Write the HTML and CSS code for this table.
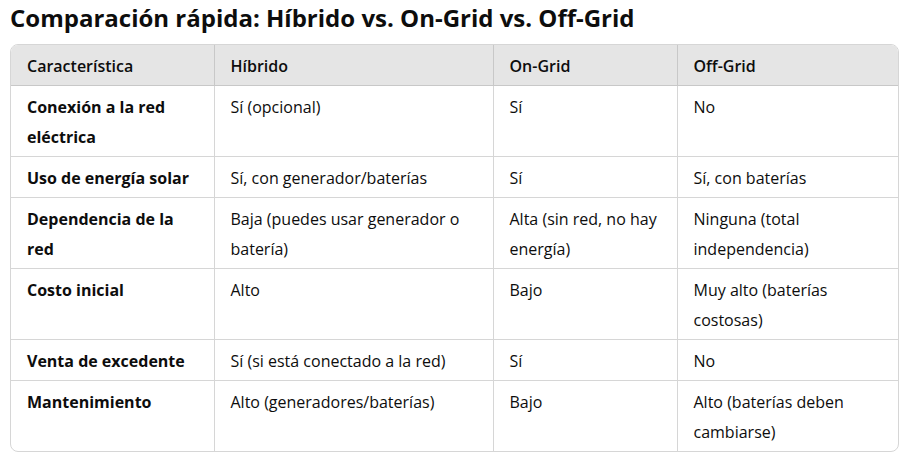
FILE: index.html
```html
<!DOCTYPE html>
<html lang="es">
<head>
<meta charset="utf-8">
<link rel="stylesheet" href="styles.css">
</head>
<body>
<main class="page">
  <h3 class="title">Comparación rápida: Híbrido vs. On-Grid vs. Off-Grid</h3>
  <div class="table-wrap">
    <table class="cmp">
      <colgroup>
        <col class="c1"><col class="c2"><col class="c3"><col class="c4">
      </colgroup>
      <thead>
        <tr><th>Característica</th><th>Híbrido</th><th>On-Grid</th><th>Off-Grid</th></tr>
      </thead>
      <tbody>
        <tr><td class="feat">Conexión a la red eléctrica</td><td>Sí (opcional)</td><td>Sí</td><td>No</td></tr>
        <tr><td class="feat">Uso de energía solar</td><td>Sí, con generador/baterías</td><td>Sí</td><td>Sí, con baterías</td></tr>
        <tr><td class="feat">Dependencia de la red</td><td>Baja (puedes usar generador o batería)</td><td>Alta (sin red, no hay energía)</td><td>Ninguna (total independencia)</td></tr>
        <tr><td class="feat">Costo inicial</td><td>Alto</td><td>Bajo</td><td>Muy alto (baterías costosas)</td></tr>
        <tr><td class="feat">Venta de excedente</td><td>Sí (si está conectado a la red)</td><td>Sí</td><td>No</td></tr>
        <tr><td class="feat">Mantenimiento</td><td>Alto (generadores/baterías)</td><td>Bajo</td><td>Alto (baterías deben cambiarse)</td></tr>
      </tbody>
    </table>
  </div>
</main>
</body>
</html>
```
FILE: styles.css
```css
* { box-sizing: border-box; }
html, body { margin: 0; padding: 0; background: #ffffff; }
body {
  font-family: "Open Sans", "Noto Sans", sans-serif;
  color: #0d0d0d;
}
.page { padding: 0 17px 0 10px; }
.title {
  margin: 0;
  padding-top: 2px;
  font-size: 24px;
  line-height: 32px;
  font-weight: 700;
}
.table-wrap {
  margin-top: 10px;
  border: 1px solid #d6d6d6;
  border-radius: 8px;
  overflow: hidden;
}
.cmp {
  width: 100%;
  border-collapse: collapse;
  table-layout: fixed;
  font-size: 16px;
  line-height: 30px;
}
.c1 { width: 203px; }
.c2 { width: 279px; }
.c3 { width: 184px; }
.c4 { width: auto; }
.cmp th, .cmp td {
  text-align: left;
  vertical-align: top;
  padding: 6px 14px 4px 16px;
  border-left: 1px solid #d6d6d6;
  border-top: 1px solid #d6d6d6;
}
.cmp th:first-child, .cmp td:first-child { border-left: none; }
.cmp thead th {
  border-top: none;
  background: #e5e5e5;
  font-weight: 600;
  border-bottom: 1px solid #c8c8c8;
  border-left-color: #c8c8c8;
}
.cmp .feat { font-weight: 700; }
```
